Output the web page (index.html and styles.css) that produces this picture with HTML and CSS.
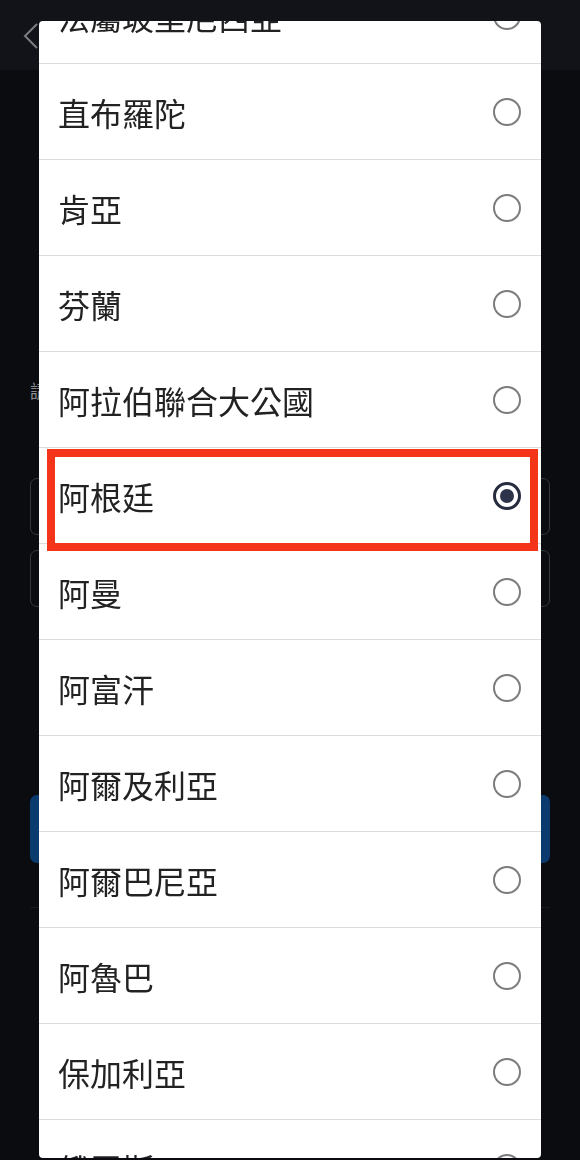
FILE: index.html
```html
<!DOCTYPE html>
<html lang="zh-Hant">
<head>
<meta charset="utf-8">
<title>選擇國家</title>
<link rel="stylesheet" href="styles.css">
</head>
<body>
<div class="app">
  <header class="topbar">
    <svg class="back" width="18" height="28" viewBox="0 0 18 28"><polyline points="15,2 3,14 15,26" fill="none" stroke="#7a7c80" stroke-width="2"/></svg>
  </header>
  <main class="content">
    <div class="label">請選擇國家或地區</div>
    <div class="field"></div>
    <div class="field second"></div>
    <div class="button"></div>
    <div class="rule"></div>
  </main>
</div>

<div class="modal">
  <ul class="list">
    <li class="row"><span class="name">法屬玻里尼西亞</span><span class="radio"></span></li>
    <li class="row"><span class="name">直布羅陀</span><span class="radio"></span></li>
    <li class="row"><span class="name">肯亞</span><span class="radio"></span></li>
    <li class="row"><span class="name">芬蘭</span><span class="radio"></span></li>
    <li class="row"><span class="name">阿拉伯聯合大公國</span><span class="radio"></span></li>
    <li class="row"><span class="name">阿根廷</span><span class="radio checked"></span></li>
    <li class="row"><span class="name">阿曼</span><span class="radio"></span></li>
    <li class="row"><span class="name">阿富汗</span><span class="radio"></span></li>
    <li class="row"><span class="name">阿爾及利亞</span><span class="radio"></span></li>
    <li class="row"><span class="name">阿爾巴尼亞</span><span class="radio"></span></li>
    <li class="row"><span class="name">阿魯巴</span><span class="radio"></span></li>
    <li class="row"><span class="name">保加利亞</span><span class="radio"></span></li>
    <li class="row"><span class="name">俄羅斯</span><span class="radio"></span></li>
  </ul>
</div>

<div class="highlight"></div>
</body>
</html>
```

FILE: styles.css
```css
html, body {
  margin: 0;
  padding: 0;
}
body {
  width: 580px;
  height: 1160px;
  overflow: hidden;
  background: #0b0c10;
  font-family: "Noto Sans CJK TC", "Noto Sans CJK SC", "Noto Sans", sans-serif;
}
.app {
  display: flex;
  flex-direction: column;
}
.topbar {
  height: 70px;
  background: #111318;
  display: flex;
  align-items: flex-start;
  padding: 22px 0 0 22px;
  box-sizing: border-box;
}
.back {
  display: block;
}
.content {
  display: flex;
  flex-direction: column;
  padding: 0 30px;
}
.label {
  margin-top: 308px;
  font-size: 18px;
  line-height: 24px;
  color: #8a8c90;
}
.field {
  margin-top: 76px;
  height: 57px;
  border: 1px solid #34373d;
  border-radius: 7px;
  box-sizing: border-box;
}
.field.second {
  margin-top: 15px;
}
.button {
  margin-top: 188px;
  height: 68px;
  border-radius: 7px;
  background: #0a3a6e;
}
.rule {
  margin-top: 44px;
  height: 1px;
  background: #181a20;
}

.modal {
  position: fixed;
  left: 39px;
  top: 21px;
  width: 502px;
  height: 1137px;
  background: #ffffff;
  border-radius: 4px;
  overflow: hidden;
}
.list {
  list-style: none;
  margin: -53px 0 0 0;
  padding: 0;
}
.row {
  height: 96px;
  box-sizing: border-box;
  border-bottom: 1px solid #dcdcdc;
  display: flex;
  align-items: center;
  justify-content: space-between;
  padding: 0 20px 0 19px;
}
.name {
  font-size: 32px;
  color: #222222;
  line-height: 40px;
}
.radio {
  width: 28px;
  height: 28px;
  box-sizing: border-box;
  border: 2.5px solid #7c7c7c;
  border-radius: 50%;
  display: flex;
  align-items: center;
  justify-content: center;
  flex-shrink: 0;
}
.radio.checked {
  border: 3px solid #262c3e;
}
.radio.checked::after {
  content: "";
  width: 14px;
  height: 14px;
  border-radius: 50%;
  background: #2d3449;
}
.highlight {
  position: fixed;
  left: 47px;
  top: 449px;
  width: 491px;
  height: 102px;
  box-sizing: border-box;
  border: 8px solid #f43519;
}
```
